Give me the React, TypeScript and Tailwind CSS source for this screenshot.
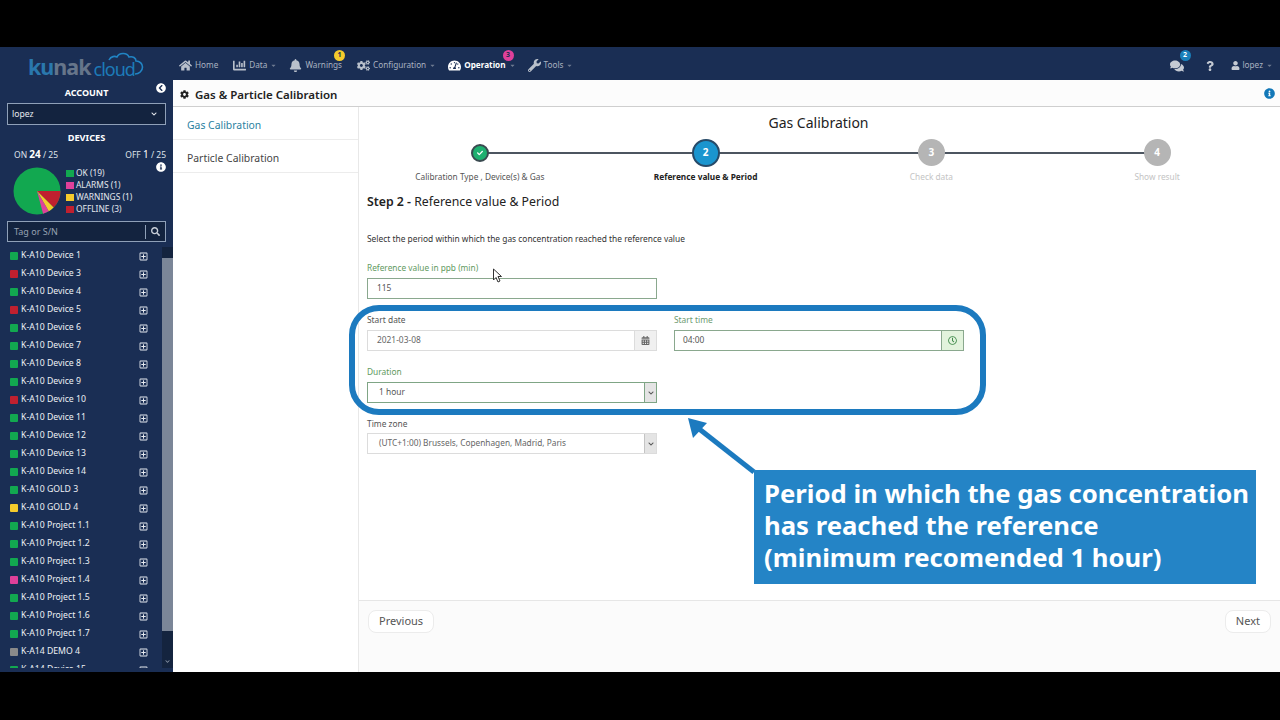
import React from "react";
import {
  FaHome, FaChartBar, FaBell, FaCogs, FaTachometerAlt, FaWrench, FaComments, FaQuestion, FaUser,
  FaCog, FaInfoCircle, FaChevronCircleLeft, FaSearch, FaCheck, FaCalendarAlt, FaRegClock, FaRegPlusSquare,
  FaCaretDown, FaChevronDown,
} from "react-icons/fa";

const G = "#12a850", R = "#c0202f", Y = "#f5cb2c", P = "#e0409a", A = "#8a8a8a";
const devices: [string, string][] = [
  ["K-A10 Device 1", G], ["K-A10 Device 3", R], ["K-A10 Device 4", G], ["K-A10 Device 5", R],
  ["K-A10 Device 6", G], ["K-A10 Device 7", G], ["K-A10 Device 8", G], ["K-A10 Device 9", G],
  ["K-A10 Device 10", R], ["K-A10 Device 11", G], ["K-A10 Device 12", G], ["K-A10 Device 13", G],
  ["K-A10 Device 14", G], ["K-A10 GOLD 3", G], ["K-A10 GOLD 4", Y], ["K-A10 Project 1.1", G],
  ["K-A10 Project 1.2", G], ["K-A10 Project 1.3", G], ["K-A10 Project 1.4", P], ["K-A10 Project 1.5", G],
  ["K-A10 Project 1.6", G], ["K-A10 Project 1.7", G], ["K-A14 DEMO 4", A], ["K-A14 Device 15", G],
];

function NavItem({ icon, label, caret, active, badge, badgeColor }: { icon: React.ReactNode; label: string; caret?: boolean; active?: boolean; badge?: string; badgeColor?: string }) {
  return (
    <div className={`relative flex items-center gap-[3px] text-[8.2px] ${caret ? "mr-[-3px]" : ""} ${active ? "text-white font-bold" : "text-[#a9b2c0]"}`}>
      <span className={`text-[13px] ${active ? "text-white" : "text-[#b9c0cb]"}`}>{icon}</span>
      <span>{label}</span>
      {caret && <FaCaretDown className="text-[7px] text-[#6d7a90]" />}
      {badge && (
        <span className={`absolute top-[-9px] flex h-[11px] w-[11px] items-center justify-center rounded-full text-[7px] font-bold text-[#1a2d52] ${caret ? "right-[2px]" : "right-[-3px]"}`} style={{ backgroundColor: badgeColor }}>{badge}</span>
      )}
    </div>
  );
}

function Legend({ color, label }: { color: string; label: string }) {
  return (
    <div className="flex h-[12.3px] items-center gap-[2px] text-[8.4px] leading-none text-[#e4e8ee]">
      <span className="h-[7px] w-[8px]" style={{ backgroundColor: color }} />
      <span>{label}</span>
    </div>
  );
}

function Step({ n, label, state }: { n: string; label: string; state: "done" | "active" | "todo" }) {
  return (
    <div className="relative z-10 flex w-1/4 flex-col items-center">
      <div className="flex h-[29px] items-center">
        {state === "done" && (
          <div className="flex h-[18px] w-[18px] items-center justify-center rounded-full border-2 border-[#3a4a50] bg-[#1eb070] text-[6px] text-white"><FaCheck /></div>
        )}
        {state === "active" && (
          <div className="flex h-[28px] w-[28px] items-center justify-center rounded-full border-2 border-[#274a68] bg-[#1a95cf] text-[10px] font-bold text-white">{n}</div>
        )}
        {state === "todo" && (
          <div className="flex h-[27px] w-[27px] items-center justify-center rounded-full bg-[#b5b5b5] text-[10px] font-bold text-white">{n}</div>
        )}
      </div>
      <div className={`mt-[4px] whitespace-nowrap text-[8.3px] leading-[12px] ${state === "active" ? "font-bold text-[#222]" : state === "done" ? "text-[#555]" : "text-[#c4c4c4]"}`}>{label}</div>
    </div>
  );
}

function SelectArrow({ green }: { green?: boolean }) {
  return (
    <span className={`flex h-full w-[12px] items-center justify-center border-l bg-[#e4e4e4] text-[6px] text-[#555] ${green ? "border-[#7fa585]" : "border-[#c4c4c4]"}`}>
      <FaChevronDown />
    </span>
  );
}

export default function App() {
  return (
    <div className="relative flex h-[720px] w-[1280px] flex-col overflow-hidden bg-black font-['Noto_Sans',sans-serif]">
      <div className="h-[47px] shrink-0 bg-black" />
      <div className="flex h-[625px] shrink-0">
        {/* Sidebar */}
        <aside className="flex w-[173px] shrink-0 flex-col overflow-hidden bg-[#1a2e54]">
          <div className="flex h-[36px] shrink-0 items-center pl-[28px] pt-[4px]">
            <span className="text-[21.5px] font-bold leading-none tracking-[-1px]"><span className="text-[#2a78ad]">ku</span><span className="text-[#66758a]">nak</span></span>
            <span className="relative ml-[3px] mt-[3px] text-[18px] font-normal leading-none tracking-[-1px] text-[#1d7bb8]">cloud
              <svg className="absolute left-[14px] top-[-8px]" width="36" height="25" viewBox="0 0 36 25" fill="none" stroke="#2184c4" strokeWidth="1.6">
                <path d="M1 8 C3 4 7 4 9 5 C11 0.5 19 0 21 5 C25 4 28 6 28 9 C32 9 34.5 12 34.5 15 C34.5 19 31 22 27 22" />
              </svg>
            </span>
          </div>
          <div className="relative flex h-[20px] shrink-0 items-center justify-center text-[9px] font-bold text-white">
            ACCOUNT
            <FaChevronCircleLeft className="absolute right-[7px] top-[0px] text-[10px] text-white" />
          </div>
          <div className="mx-[7px] flex h-[22px] shrink-0 items-center justify-between border border-[#8fa0b8] bg-[#13233f] pl-[4px] pr-[8px] text-[8.6px] text-[#e8ebf0]">
            <span>lopez</span>
            <FaChevronDown className="text-[6px]" />
          </div>
          <div className="mt-[6px] shrink-0 text-center text-[9.2px] font-bold leading-[14px] text-white">DEVICES</div>
          <div className="relative mt-[1px] flex h-[16px] shrink-0 items-center justify-between pl-[14px] pr-[7px] text-[8.5px] text-[#dfe3ea]">
            <span>ON <b className="text-[10px] text-white">24</b> / 25</span>
            <span>OFF <b className="text-[10px] font-normal text-white">1</b> / 25</span>
            <FaInfoCircle className="absolute right-[7px] top-[16px] text-[10px] text-white" />
          </div>
          <div className="mt-[5px] flex h-[48px] shrink-0 pl-[13px]">
            <svg width="48" height="48" viewBox="-24 -24 48 48" className="shrink-0">
              <circle r="23.5" fill={G} />
              <path d="M0 0 L23.5 0 A23.5 23.5 0 0 1 16.6 16.6 Z" fill={R} />
              <path d="M0 0 L16.6 16.6 A23.5 23.5 0 0 1 11.75 20.35 Z" fill={Y} />
              <path d="M0 0 L11.75 20.35 A23.5 23.5 0 0 1 6.08 22.7 Z" fill={P} />
            </svg>
            <div className="ml-[5px] flex flex-col justify-center">
              <Legend color={G} label="OK (19)" />
              <Legend color={P} label="ALARMS (1)" />
              <Legend color={Y} label="WARNINGS (1)" />
              <Legend color={R} label="OFFLINE (3)" />
            </div>
          </div>
          <div className="mx-[7px] mt-[6px] flex h-[21px] shrink-0 items-center border border-[#8fa0b8] bg-[#13233f] text-[9px] text-[#97a2b3]">
            <span className="flex-1 pl-[6px]">Tag or S/N</span>
            <span className="flex h-[14px] w-[20px] items-center justify-center border-l border-[#8fa0b8] text-[9px] text-[#c8ced8]"><FaSearch /></span>
          </div>
          <div className="mt-[5px] mb-[4px] flex min-h-0 flex-1">
            <div className="min-w-0 flex-1 overflow-hidden">
              {devices.map(([name, color]) => (
                <div key={name} className="flex h-[18px] items-center pl-[10px] pr-[14px] text-[8.7px] text-[#eef1f5]">
                  <span className="mr-[3px] h-[8px] w-[8px] shrink-0 rounded-[1px]" style={{ backgroundColor: color }} />
                  <span className="flex-1 whitespace-nowrap">{name}</span>
                  <FaRegPlusSquare className="text-[9px] text-[#e6eaf0]" />
                </div>
              ))}
            </div>
            <div className="flex w-[11px] shrink-0 flex-col bg-[#14243f]">
              <div className="h-[11px]" />
              <div className="h-[373px] bg-[#7b8698]" />
              <div className="flex-1" />
              <FaChevronDown className="mb-[4px] ml-[3px] text-[5px] text-[#8b96a8]" />
            </div>
          </div>
        </aside>

        {/* Right */}
        <div className="flex min-w-0 flex-1 flex-col">
          <header className="flex h-[33px] shrink-0 items-center justify-between bg-[#1a2e54] pr-[7px] pt-[4px]">
            <div className="flex items-center gap-[15px] pl-[6px]">
              <NavItem icon={<FaHome />} label="Home" />
              <NavItem icon={<FaChartBar />} label="Data" caret />
              <NavItem icon={<FaBell />} label="Warnings" badge="1" badgeColor="#f5cb2c" />
              <NavItem icon={<FaCogs />} label="Configuration" caret />
              <NavItem icon={<FaTachometerAlt />} label="Operation" caret active badge="3" badgeColor="#e0409a" />
              <NavItem icon={<FaWrench />} label="Tools" caret />
            </div>
            <div className="flex items-center">
              <div className="relative text-[14px] text-[#c5cad3]"><FaComments />
                <span className="absolute right-[-7px] top-[-9px] flex h-[11px] w-[11px] items-center justify-center rounded-full bg-[#1a80bb] text-[7px] font-bold text-white">2</span>
              </div>
              <FaQuestion className="ml-[21px] text-[10px] text-[#c5cad3]" />
              <div className="ml-[16px] flex items-center gap-[3px] text-[8.2px] text-[#a9b2c0]">
                <FaUser className="text-[9px] text-[#c5cad3]" /><span>lopez</span><FaCaretDown className="text-[7px] text-[#6d7a90]" />
              </div>
            </div>
          </header>

          <div className="flex h-[27px] shrink-0 items-center justify-between border-b border-[#cfcfcf] bg-[#fcfcfc] pl-[7px] pr-[5px]">
            <div className="flex items-center gap-[6px] pt-[3px] text-[11.5px] font-bold text-[#222]">
              <FaCog className="text-[9px]" /><span className="font-semibold">Gas &amp; Particle Calibration</span>
            </div>
            <FaInfoCircle className="text-[11px] text-[#1378b8]" />
          </div>

          <div className="flex min-h-0 flex-1 bg-white">
            <nav className="w-[186px] shrink-0 border-r border-[#e8e8e8]">
              <div className="flex h-[33px] items-center border-b border-[#ececec] pl-[14px] pt-[6px] text-[10.4px] text-[#2a7f9f]">Gas Calibration</div>
              <div className="flex h-[33px] items-center border-b border-[#ececec] pl-[14px] pt-[6px] text-[10.4px] text-[#444]">Particle Calibration</div>
            </nav>
            <main className="flex min-w-0 flex-1 flex-col">
              <div className="flex-1 pl-[8px] pr-[10px]">
                <div className="mt-[5px] text-center text-[14px] leading-[22px] text-[#222]">Gas Calibration</div>
                <div className="relative mt-[4px] flex">
                  <div className="absolute left-[113px] right-[113px] top-[13.5px] h-[2px] bg-[#4c5560]" />
                  <Step n="1" label="Calibration Type , Device(s) & Gas" state="done" />
                  <Step n="2" label="Reference value & Period" state="active" />
                  <Step n="3" label="Check data" state="todo" />
                  <Step n="4" label="Show result" state="todo" />
                </div>
                <div className="mt-[9px] text-[12.3px] leading-[20px] text-[#222]"><b className="font-semibold">Step 2 -</b> Reference value &amp; Period</div>
                <div className="mt-[20px] text-[8.4px] leading-[14px] text-[#333]">Select the period within which the gas concentration reached the reference value</div>

                <div className="mt-[16px] text-[8.3px] leading-[12px] text-[#5f9a60]">Reference value in ppb (min)</div>
                <div className="mt-[4px] flex h-[21px] w-[290px] items-center border border-[#8aa88e] pl-[9px] text-[8.4px] text-[#555]">115</div>

                <div className="mt-[15px] flex gap-[17px]">
                  <div className="w-[290px]">
                    <div className="text-[8.4px] leading-[12px] text-[#555]">Start date</div>
                    <div className="mt-[4px] flex h-[21px] items-center border border-[#dcdcdc]">
                      <span className="flex-1 pl-[9px] text-[8.4px] text-[#666]">2021-03-08</span>
                      <span className="flex h-full w-[22px] items-center justify-center border-l border-[#dcdcdc] bg-[#f0f0f0] text-[9px] text-[#666]"><FaCalendarAlt /></span>
                    </div>
                  </div>
                  <div className="w-[290px]">
                    <div className="text-[8.4px] leading-[12px] text-[#6d9a70]">Start time</div>
                    <div className="mt-[4px] flex h-[21px] items-center border border-[#8aa88e]">
                      <span className="flex-1 pl-[8px] text-[8.4px] text-[#555]">04:00</span>
                      <span className="flex h-full w-[22px] items-center justify-center border-l border-[#8aa88e] bg-[#e2f3dc] text-[9px] text-[#3f8a4a]"><FaRegClock /></span>
                    </div>
                  </div>
                </div>

                <div className="mt-[15px] text-[8.4px] leading-[12px] text-[#5f9a60]">Duration</div>
                <div className="mt-[4px] flex h-[21px] w-[290px] items-center border border-[#7fa585]">
                  <span className="flex-1 pl-[11px] text-[8.4px] text-[#555]">1 hour</span>
                  <SelectArrow green />
                </div>

                <div className="mt-[15px] text-[8.4px] leading-[12px] text-[#555]">Time zone</div>
                <div className="mt-[3px] flex h-[21px] w-[290px] items-center border border-[#dcdcdc]">
                  <span className="flex-1 pl-[11px] text-[8.3px] text-[#666]">(UTC+1:00) Brussels, Copenhagen, Madrid, Paris</span>
                  <SelectArrow />
                </div>
              </div>
              <div className="flex h-[72px] shrink-0 items-start justify-between border-t border-[#e6e6e6] bg-[#fbfbfb] px-[9px] pt-[9px]">
                <button className="h-[23px] rounded-[8px] border border-[#ececec] bg-white px-[10px] text-[11px] text-[#555]">Previous</button>
                <button className="h-[23px] rounded-[8px] border border-[#ececec] bg-white px-[10px] text-[11px] text-[#555]">Next</button>
              </div>
            </main>
          </div>
        </div>
      </div>
      <div className="flex-1 bg-black" />

      {/* Annotation overlay */}
      <div className="pointer-events-none absolute left-[349px] top-[305px] h-[110px] w-[637px] rounded-[30px] border-[6px] border-[#1c7abf]" />
      <svg className="pointer-events-none absolute left-[680px] top-[410px]" width="90" height="70" viewBox="0 0 90 70">
        <path d="M74 62 L18 18" stroke="#1c7abf" strokeWidth="5" fill="none" />
        <path d="M8 8 L27 13 L13 28 Z" fill="#1c7abf" />
      </svg>
      <div className="absolute left-[754px] top-[470px] flex h-[114px] w-[502px] items-center bg-[#2484c6] pb-[3px] pl-[10px] text-[25.7px] font-bold leading-[32px] text-white">
        <div className="whitespace-nowrap">Period in which the gas concentration<br />has reached the reference<br />(minimum recomended 1 hour)</div>
      </div>
      <svg className="pointer-events-none absolute left-[492px] top-[268px]" width="11" height="16" viewBox="0 0 11 16">
        <path d="M1.5 1 L1.5 12 L4 9.5 L6 14 L8 13 L6 8.5 L9.5 8.5 Z" fill="#fff" stroke="#333" strokeWidth="1" />
      </svg>
    </div>
  );
}
